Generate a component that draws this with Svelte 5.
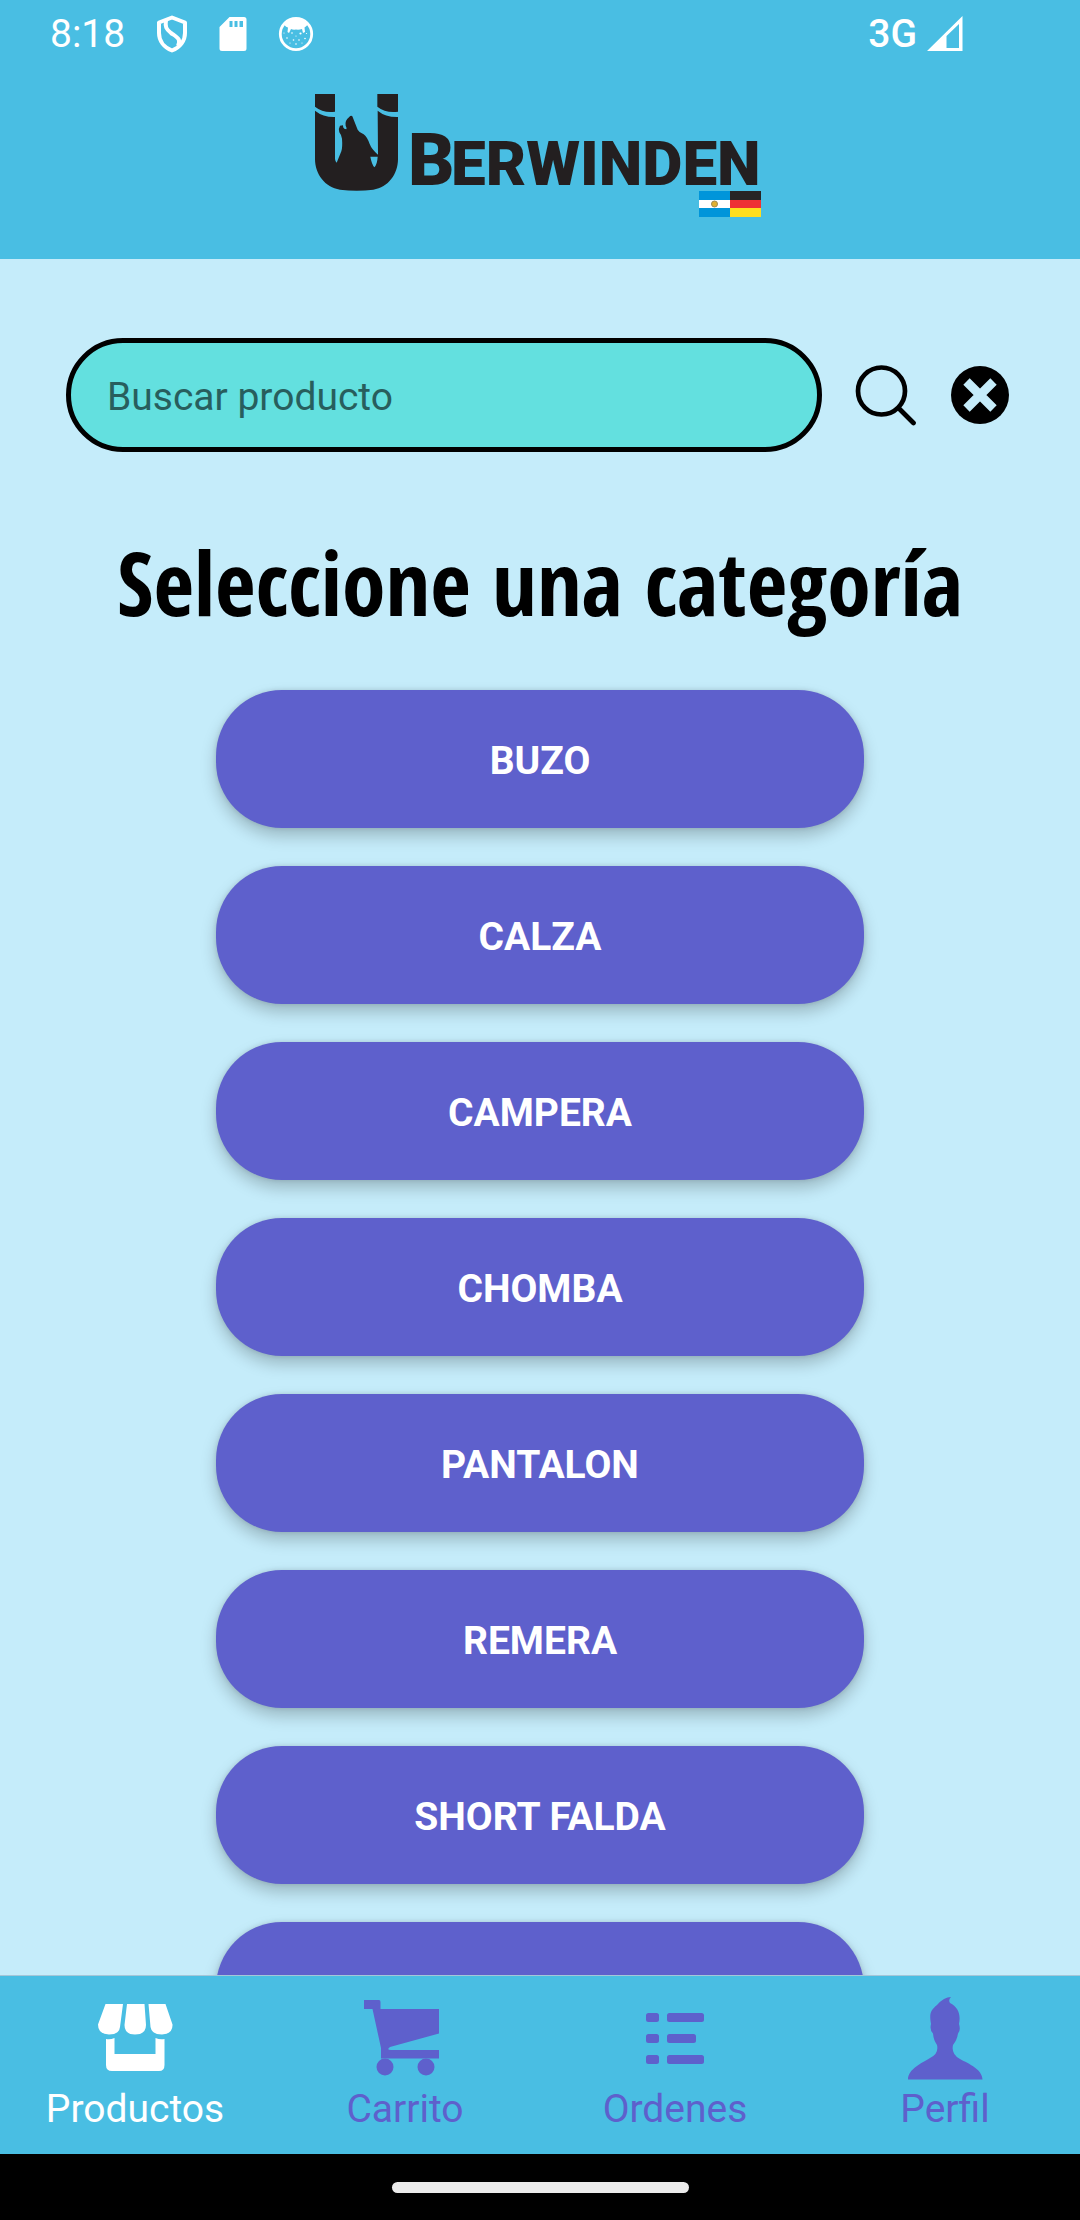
<script>
  const categories = ['BUZO', 'CALZA', 'CAMPERA', 'CHOMBA', 'PANTALON', 'REMERA', 'SHORT FALDA', ''];
  const tabs = [
    { id: 'shop', label: 'Productos' },
    { id: 'cart', label: 'Carrito' },
    { id: 'orders', label: 'Ordenes' },
    { id: 'profile', label: 'Perfil' }
  ];
  let active = $state('shop');
  let query = $state('');
</script>

<div class="app">
  <header>
    <div class="status">
      <span class="time">8:18</span>
      <svg width="32" height="38" viewBox="0 0 32 38" fill="none" stroke="#fff" stroke-width="4" stroke-linejoin="round">
        <path d="M16 2.5 29 7.500V18C29 26 24 32.500 16 35.500C8 32.500 3 26 3 18V7.500Z" />
        <path d="M10 5C9 12 10 14 15 18C22 23 25 24 22 31" />
      </svg>
      <svg width="28" height="36" viewBox="0 0 28 36">
        <path fill="#fff" fill-rule="evenodd" d="M10.500 1H25Q27.500 1 27.500 3.500V32.500Q27.500 35 25 35H3Q.5 35 .5 32.500V11ZM10.500 5V11H13.500V5ZM15.500 5V11H18.500V5ZM20.500 5V11H24V5Z" />
      </svg>
      <svg width="36" height="36" viewBox="0 0 36 36">
        <circle cx="18" cy="18" r="15.700" fill="none" stroke="#fff" stroke-width="2.800" />
        <path fill="#fff" d="M6 7.500Q18-2 30 7.500C29 10 28 10.500 26.500 11.500L27 16L25 17L24 13Q21 14 18 13.500Q15 14 13 13L11 17L9.500 16L10 11.500Q7 11 6 7.500Z" />
        <g fill="#fff">
          <circle cx="14" cy="17" r=".8" /><circle cx="22.500" cy="17.500" r="1.100" /><circle cx="6" cy="17" r=".6" />
          <circle cx="9" cy="22" r=".8" /><circle cx="15.500" cy="24" r=".8" /><circle cx="21" cy="24" r=".8" />
          <circle cx="27" cy="22.500" r=".8" /><circle cx="12" cy="27" r=".6" /><circle cx="18" cy="28" r=".8" />
          <circle cx="24" cy="27" r=".6" /><circle cx="18" cy="20" r=".6" /><circle cx="28.500" cy="17.500" r=".6" />
        </g>
      </svg>
      <span class="network">3G</span>
      <svg class="signal" width="36" height="36" viewBox="0 0 36 36">
        <path fill="#fff" fill-rule="evenodd" d="M0 35 35.500 0V35ZM19.500 20V32H32V8Z" />
      </svg>
    </div>
    <svg class="logo" viewBox="0 0 450 124" role="img" aria-label="Überwinden">
      <svg width="84" height="98" viewBox="0 0 252 294" fill="#231f20">
        <path d="M0 0H60V53Q25 58 0 38ZM187 0H249V53Q212 58 187 38Z" />
        <path fill-rule="evenodd" d="M0 50Q25 70 60 69V195Q61 204 65 206L79 172Q83 160 81 134Q80 124 73 115Q70 102 75 95L84 94Q83 101 88 104L94 106Q96 102 92 95Q89 80 102 70Q108 63 112 67L128 107Q132 115 146 121Q156 128 164 150Q170 166 189 182L188 50Q212 70 249 69V195C249 240 220 280 175 287Q125 293 75 287C30 280 0 240 0 195ZM166 188H188Q187 210 178 220Q170 210 166 188Z" />
      </svg>
      <text x="93" y="91" class="initial">B</text>
      <text x="136" y="91" class="word">ERWINDEN</text>
      <rect x="384" y="97" width="31" height="26" fill="#0095da" />
      <rect x="384" y="106" width="31" height="8" fill="#fff" />
      <circle cx="399.500" cy="110" r="3" fill="#e0b030" stroke="#a08a50" />
      <rect x="415" y="97" width="31" height="9" fill="#272425" />
      <rect x="415" y="106" width="31" height="8" fill="#ee3135" />
      <rect x="415" y="114" width="31" height="9" fill="#ffde1f" />
    </svg>
  </header>

  <main>
    <form class="search" onsubmit={(e) => e.preventDefault()}>
      <input type="text" aria-label="Buscar producto" placeholder="Buscar producto" bind:value={query} />
      <button type="submit" aria-label="Buscar">
        <svg width="62" height="62" viewBox="0 0 62 62" fill="none" stroke="#000" stroke-width="4.700" stroke-linecap="round">
          <circle cx="26.500" cy="27" r="23.500" />
          <path d="M44 44.500 58.500 59" />
        </svg>
      </button>
      <button type="button" aria-label="Limpiar" onclick={() => (query = '')}>
        <svg width="60" height="60" viewBox="0 0 60 60">
          <circle cx="30" cy="30" r="29" />
          <path d="M16.500 16.500 43.500 43.500M43.500 16.500 16.500 43.500" stroke="#c5ecfa" stroke-width="9" />
        </svg>
      </button>
    </form>
    <h1>Seleccione una categoría</h1>
    <div class="list">
      {#each categories as name}
        <button class="category" type="button" aria-label={name || 'Otra categoría'}>{name}</button>
      {/each}
    </div>
  </main>

  <nav class="tabs">
    {#each tabs as tab}
      <button type="button" class:active={active === tab.id} onclick={() => (active = tab.id)}>
        <svg width="90" height="90" viewBox="0 0 90 90" fill="currentColor">
          {#if tab.id === 'shop'}
            <path d="M15.500 11H33L30 34Q29 41.500 19 41.500Q8 41 8 31.500ZM37 11H54.500L56 32Q56 41.500 45 41.500Q34.500 41.500 34.500 32ZM58.500 11H75.500L82.500 31.500Q83 41 72 41.500Q62 41.500 60.500 34Z" />
            <path d="M16 46Q20 47 24.500 45V61H65.500V45Q70 47 74.500 46V72Q74.500 78 69 78H22Q16 78 16 72Z" />
          {:else if tab.id === 'cart'}
            <path d="M4 7H19Q20.500 7 20.500 9V16H79V40.500L30 54Q26 57 31 57H79V65.500H21V55L12.500 16H4Z" />
            <circle cx="25" cy="74" r="8.500" /><circle cx="66" cy="74" r="8.500" />
          {:else if tab.id === 'orders'}
            {#each [[20, 37], [41, 29], [62, 37]] as [y, w]}
              <rect x="16" {y} width="13" height="9" rx="2.500" />
              <rect x="37" {y} width={w} height="9" rx="2.500" />
            {/each}
          {:else}
            <path d="M51 4Q48 7 50 10C58 14 61 21 59 31Q61 37 58 40.500Q57 47 53 52Q51 61 60 66C69 71 82 76 82.500 86.500H8C8 76 22 70 30 65Q39 61 37 52Q33.500 47 33 40.500Q29.500 37 31 31C29 20 31 17 37 12Q44 4 51 4Z" />
          {/if}
        </svg>
        <span>{tab.label}</span>
      </button>
    {/each}
  </nav>
  <footer><div class="pill"></div></footer>
</div>

<style>
  :global(body) { margin: 0; }
  .app {
    height: 100vh;
    display: flex;
    flex-direction: column;
    overflow: hidden;
    background: #c5ecfa;
    font-family: Roboto, 'Liberation Sans', sans-serif;
    font-size: 39px;
  }
  svg { display: block; flex: none; }
  button {
    border: 0;
    padding: 0;
    background: none;
    font: inherit;
    color: inherit;
    cursor: pointer;
  }
  header {
    display: flex;
    flex-direction: column;
    align-items: center;
    padding-bottom: 41px;
    background: #49bee3;
  }
  .status {
    align-self: stretch;
    box-sizing: border-box;
    display: flex;
    align-items: center;
    gap: 31px;
    height: 68px;
    padding: 0 117px 0 50px;
    margin-bottom: 26px;
    color: #fff;
  }
  .network {
    margin-left: auto;
    margin-right: -21px;
    font-weight: 500;
    line-height: 64px;
  }
  .logo { width: 450px; height: 124px; }
  .logo text { font-weight: 900; fill: #231f20; }
  .initial { font-size: 72px; }
  .word { font-size: 62px; }
  main {
    flex: 1;
    min-height: 0;
    overflow: hidden;
  }
  .search {
    display: flex;
    align-items: center;
    gap: 33px;
    padding: 79px 70px 0 66px;
  }
  input {
    flex: 1;
    min-width: 0;
    box-sizing: border-box;
    height: 114px;
    padding: 4px 36px 0;
    border: 5px solid #000;
    border-radius: 57px;
    background: #63e0df;
    font: inherit;
    color: #000;
  }
  input::placeholder { color: #285e5d; opacity: 1; }
  h1 {
    margin: 70px 0 48px;
    text-align: center;
    font-family: 'Open Sans Condensed', 'Liberation Sans Narrow', 'DejaVu Sans Condensed', sans-serif;
    font-size: 88px;
    line-height: 120px;
    white-space: nowrap;
    color: #000;
  }
  .list {
    display: flex;
    flex-direction: column;
    align-items: center;
    gap: 38px;
  }
  .category {
    width: 60%;
    height: 138px;
    flex: none;
    padding-top: 3px;
    border-radius: 66px;
    background: #5e60cc;
    color: #fff;
    font-weight: 700;
    box-shadow: 0 8px 16px rgba(0, 0, 0, 0.22), 0 0 5px rgba(0, 0, 0, 0.12);
  }
  .tabs {
    display: grid;
    grid-template-columns: repeat(4, 1fr);
    height: 178px;
    border-top: 1px solid #a5c6d8;
    background: #49bee3;
  }
  .tabs button {
    display: flex;
    flex-direction: column;
    align-items: center;
    padding-top: 17px;
    color: #5e60cc;
    line-height: 52px;
  }
  .tabs button.active { color: #fff; }
  footer {
    display: flex;
    align-items: center;
    justify-content: center;
    height: 66px;
    background: #000;
  }
  .pill {
    width: 297px;
    height: 11px;
    border-radius: 6px;
    background: #ebebeb;
  }
</style>
